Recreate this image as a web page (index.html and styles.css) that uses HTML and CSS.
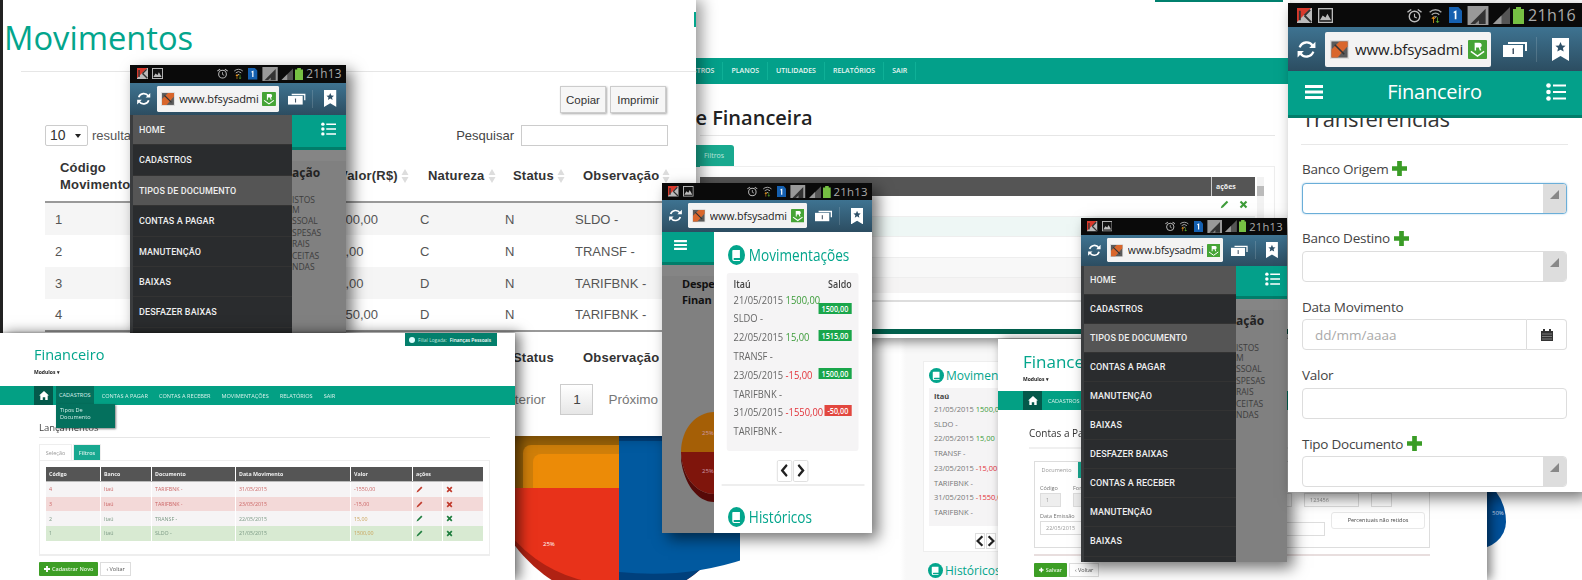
FILE: index.html
```html
<!DOCTYPE html>
<html lang="pt-BR">
<head>
<meta charset="utf-8">
<title>Financeiro</title>
<link rel="stylesheet" href="styles.css">
</head>
<body>
<svg class="sprite" aria-hidden="true">
  <symbol id="i-k" viewBox="0 0 16 16"><rect width="16" height="16" fill="#bbb"/><path d="M0 0h15L0 15z" fill="#d8392c"/><path d="M8 8l7 7M8 8l6-6M3 3v10" stroke="#333" stroke-width="2" fill="none"/></symbol>
  <symbol id="i-pic" viewBox="0 0 16 16"><rect x=".7" y=".7" width="14.6" height="14.6" fill="#111" stroke="#bbb" stroke-width="1.4"/><path d="M2 13l3-5 3 2 2-4 4 7z" fill="#bbb"/></symbol>
  <symbol id="i-alarm" viewBox="0 0 16 16"><circle cx="8" cy="9" r="5.6" fill="none" stroke="#bbb" stroke-width="1.5"/><path d="M8 6v3.4l2.4 1.2" fill="none" stroke="#bbb" stroke-width="1.2"/><path d="M0 4l4-3 1 1-4 3zM16 4l-4-3-1 1 4 3z" fill="#bbb"/></symbol>
  <symbol id="i-wifi" viewBox="0 0 16 18"><path d="M1 5a10 10 0 0 1 14 0M3.5 8a6.5 6.5 0 0 1 9 0" fill="none" stroke="#aaa" stroke-width="1.6"/><path d="M6 10h4l-2 2z" fill="#aaa"/><path d="M5 18v-5H3l2.500-3L8 13H6v5z" fill="#e8941a"/><path d="M11 11v5h2l-2.500 2L8 16h2v-5z" fill="#5bb030"/></symbol>
  <symbol id="i-sim" viewBox="0 0 14 17"><path d="M0 0h10l4 4v13H0z" fill="#1560b0"/><path d="M5 5l3-1.500V13H6.200V6L5 6.500z" fill="#fff"/></symbol>
  <symbol id="i-sigbox" viewBox="0 0 22 20"><rect width="22" height="20" fill="#999"/><path d="M3 19L19 3v16z" fill="#333"/><path d="M8 19l4-4v4z" fill="#888"/></symbol>
  <symbol id="i-sig" viewBox="0 0 18 18"><path d="M0 18L18 0v18z" fill="#555"/><path d="M0 18l9-9v9z" fill="#999"/></symbol>
  <symbol id="i-batt" viewBox="0 0 11 17"><path d="M3 0h5v2h3v15H0V2h3z" fill="#76c043"/></symbol>
  <symbol id="i-refresh" viewBox="0 0 20 20"><path d="M3.500 8A7 7 0 0 1 16 6.500M16.500 12A7 7 0 0 1 4 13.500" fill="none" stroke="#fff" stroke-width="2.200"/><path d="M18.500 2.500v6h-6zM1.500 17.500v-6h6z" fill="#fff"/></symbol>
  <symbol id="i-fav" viewBox="0 0 20 20"><rect width="20" height="20" fill="#ddd"/><rect x="1.500" y="1.500" width="17" height="17" fill="#5a5a5a"/><path d="M1.500 10L10 1.500h8.500v5L8 18.500H1.500z" fill="#d9662c"/><path d="M5 5l10 10" stroke="#333" stroke-width="1.600"/></symbol>
  <symbol id="i-r" viewBox="0 0 20 20"><rect width="20" height="20" rx="1" fill="#45a436"/><path d="M7 3h5a2.500 2.500 0 0 1 1 4.800L14 11h-1.600l-1-3H8.500v3H7z" fill="#fff"/><path d="M3 12l7 5 7-5" fill="none" stroke="#fff" stroke-width="1.500"/></symbol>
  <symbol id="i-tabs" viewBox="0 0 24 16"><path d="M5 1h19v9h-2V3H5z" fill="#fff"/><rect y="4" width="20" height="12" fill="#fff"/><path d="M9 8l2-1v6H9.500V8.500z" fill="#456"/></symbol>
  <symbol id="i-bm" viewBox="0 0 17 23"><path d="M0 0h17v23l-8.500-5L0 23z" fill="#fff"/><path d="M8.500 4l1.500 3.400 3.600.3-2.700 2.400.8 3.500-3.200-1.900-3.200 1.900.8-3.500L3.400 7.700 7 7.400z" fill="#2e5068"/></symbol>
  <symbol id="i-burger" viewBox="0 0 18 14"><path d="M0 0h18v3H0zM0 5.500h18v3H0zM0 11h18v3H0z" fill="#fff"/></symbol>
  <symbol id="i-list" viewBox="0 0 20 18"><circle cx="2.500" cy="2.500" r="2.300" fill="#fff"/><circle cx="2.500" cy="9" r="2.300" fill="#fff"/><circle cx="2.500" cy="15.500" r="2.300" fill="#fff"/><path d="M7 1.500h13v2H7zM7 8h13v2H7zM7 14.500h13v2H7z" fill="#fff"/></symbol>
  <symbol id="i-book" viewBox="0 0 20 20"><circle cx="10" cy="10" r="10" fill="#03a58c"/><path d="M6 5h8v8H7.500a1 1 0 0 0 0 2H14v1H7a2 2 0 0 1-2-2V6a1 1 0 0 1 1-1z" fill="#fff"/></symbol>
  <symbol id="i-plus" viewBox="0 0 16 16"><path d="M5.500 0h5v5.500H16v5h-5.500V16h-5v-5.500H0v-5h5.500z" fill="#3a9c26"/></symbol>
  <symbol id="i-pen" viewBox="0 0 12 12"><path d="M9 1l2 2-7 7-3 1 1-3z" fill="currentColor"/></symbol>
  <symbol id="i-x" viewBox="0 0 12 12"><path d="M1 3l2-2 3 3 3-3 2 2-3 3 3 3-2 2-3-3-3 3-2-2 3-3z" fill="currentColor"/></symbol>
  <symbol id="i-cal" viewBox="0 0 12 12"><path d="M0 2h2V0h2v2h4V0h2v2h2v10H0z" fill="#333"/><path d="M1 5h10M1 7.500h10M1 10h10" stroke="#999" stroke-width=".7"/></symbol>
  <symbol id="i-home" viewBox="0 0 12 11"><path d="M6 0l6 5.500h-1.500V11H7.500V7.500h-3V11H1.500V5.500H0z" fill="#fff"/></symbol>
  <symbol id="i-left" viewBox="0 0 10 14"><path d="M8 1L2 7l6 6" fill="none" stroke="#222" stroke-width="2.800"/></symbol>
  <symbol id="i-right" viewBox="0 0 10 14"><path d="M2 1l6 6-6 6" fill="none" stroke="#222" stroke-width="2.800"/></symbol>
  <symbol id="i-sort" viewBox="0 0 8 14"><path d="M4 0l3.500 6h-7zM4 14L.500 8h7z" fill="#ddd"/></symbol>
  <symbol id="i-tri" viewBox="0 0 10 10"><path d="M0 10L10 0v10z" fill="#888"/></symbol>
</svg>

<main class="desktop">

  <svg class="chart" viewBox="0 0 260 145">
    <ellipse cx="104" cy="15" rx="135" ry="150" fill="#b02213"/>
    <path d="M104 15v150a135 150 0 0 0 135-150l-5-15H104z" fill="#00407c"/>
    <path d="M0 0h104v53H0z" fill="#9a6208"/>
    <path d="M8 18a8 8 0 0 1 8-8h88v43H8z" fill="#d07f0a"/>
    <path d="M18 27a8 8 0 0 1 8-8h78v34H18z" fill="#ec8b07"/>
    <path d="M-30 53h134v96A135 135 0 0 1-30 53z" fill="#e8321a"/>
    <path d="M104 0h126v3H104z" fill="#003a70"/>
    <path d="M104 6h126v118q-60 20-126 13z" fill="#01599f"/>
    <text x="28" y="111" class="chart-label">25%</text>
  </svg>

  <div class="pie-edge"><span>50%</span></div>

  <section class="window win-c">
    <div class="c-card">
      <h3 class="c-title"><svg class="c-ico"><use href="#i-book"/></svg>Movimentações</h3>
      <div class="c-box">
        <p class="c-bank">Itaú</p>
        <p class="c-line">21/05/2015 <span class="pos">1500,00</span></p>
        <p class="c-line">SLDO -</p>
        <p class="c-line">22/05/2015 <span class="pos">15,00</span></p>
        <p class="c-line">TRANSF -</p>
        <p class="c-line">23/05/2015 <span class="neg">-15,00</span></p>
        <p class="c-line">TARIFBNK -</p>
        <p class="c-line">31/05/2015 <span class="neg">-1550,00</span></p>
        <p class="c-line">TARIFBNK -</p>
      </div>
      <div class="c-pager">
        <span class="c-page"><svg class="c-arrow"><use href="#i-left"/></svg></span>
        <span class="c-page"><svg class="c-arrow"><use href="#i-right"/></svg></span>
      </div>
    </div>
    <h3 class="c-title c-hist"><svg class="c-ico"><use href="#i-book"/></svg>Históricos</h3>
  </section>

  <section class="window win-b">
    <div class="b-topbar"></div>
    <nav class="b-nav">
      <span class="b-nav-item">CADASTROS</span>
      <span class="b-nav-item">PLANOS</span>
      <span class="b-nav-item">UTILIDADES</span>
      <span class="b-nav-item">RELATÓRIOS</span>
      <span class="b-nav-item">SAIR</span>
    </nav>
    <h2 class="b-title">Análise Financeira</h2>
    <div class="b-tabs"><span class="b-tab">Filtros</span></div>
    <div class="b-panel">
      <div class="b-table">
        <div class="b-head"><span class="b-head-main"></span><span class="b-head-act">ações</span></div>
        <div class="b-row"><span class="b-row-act"><svg class="b-ico"><use href="#i-pen"/></svg><svg class="b-ico"><use href="#i-x"/></svg></span></div>
        <div class="b-row b-row-tint"></div>
        <div class="b-row"></div>
        <div class="b-row b-row-gray"></div>
        <div class="b-row b-row-end"></div>
      </div>
      <div class="b-scroll"><span class="b-thumb"></span></div>
    </div>
    <div class="b-foot"></div>
  </section>

  <section class="window win-g">
    <header class="e-head g-head">
      <div class="e-brand g-brand">Financeiro</div>
      <div class="e-mod">Modulos ▾</div>
    </header>
    <nav class="e-nav g-nav">
      <span class="e-home"><svg class="e-home-ico"><use href="#i-home"/></svg></span>
      <span class="e-nav-item">CADASTROS</span>
    </nav>
    <div class="g-page">
      <h2 class="g-title">Contas a Pagar</h2>
      <div class="g-panel">
        <div class="g-tabs"><span class="g-tab">Documento</span><span class="g-tab-on"></span></div>
        <div class="g-fields">
          <label class="g-field">Código<span class="g-input g-input-gray g-w-code">1</span></label>
          <label class="g-field">Fornecedor<span class="g-input g-input-gray g-w-forn"></span></label>
          <span class="g-input g-sel"></span>
          <span class="g-input g-w-num">123456</span>
          <span class="g-input g-w-small"></span>
        </div>
        <div class="g-fields g-fields-2">
          <label class="g-field">Data Emissão<span class="g-input g-w-date">22/05/2015</span></label>
          <span class="g-input g-w-long"></span>
          <span class="g-btn-outline">Percentuais não retidos</span>
        </div>
      </div>
      <div class="g-rule"></div>
      <div class="g-actions">
        <span class="btn-green g-save"><svg class="btn-plus"><use href="#i-plus"/></svg>Salvar</span>
        <span class="btn-plain">‹ Voltar</span>
      </div>
    </div>
  </section>

  <section class="window win-a">
    <h1 class="a-title">Movimentos</h1>
    <div class="a-tools">
      <button class="a-btn a-btn-copy">Copiar</button>
      <button class="a-btn a-btn-print">Imprimir</button>
    </div>
    <div class="a-filter">
      <span class="a-len">10<i class="a-caret"></i></span>
      <span class="a-label">resultados</span>
      <span class="a-search-label">Pesquisar</span>
      <span class="a-search"></span>
    </div>
    <div class="a-grid a-head">
      <span class="a-th a-th-first">Código<br>Movimento</span>
      <span class="a-th">Histórico</span>
      <span class="a-th">Valor(R$)<svg class="a-sort"><use href="#i-sort"/></svg></span>
      <span class="a-th">Natureza<svg class="a-sort"><use href="#i-sort"/></svg></span>
      <span class="a-th">Status<svg class="a-sort"><use href="#i-sort"/></svg></span>
      <span class="a-th">Observação<svg class="a-sort"><use href="#i-sort"/></svg></span>
    </div>
    <div class="a-grid a-row a-row-alt"><span>1</span><span></span><span>1500,00</span><span>C</span><span>N</span><span>SLDO -</span></div>
    <div class="a-grid a-row"><span>2</span><span></span><span>15,00</span><span>C</span><span>N</span><span>TRANSF -</span></div>
    <div class="a-grid a-row a-row-alt"><span>3</span><span></span><span>15,00</span><span>D</span><span>N</span><span>TARIFBNK -</span></div>
    <div class="a-grid a-row a-row-last"><span>4</span><span></span><span>1550,00</span><span>D</span><span>N</span><span>TARIFBNK -</span></div>
    <div class="a-grid a-foot">
      <span></span><span></span><span></span><span></span>
      <span class="a-th">Status</span>
      <span class="a-th">Observação</span>
    </div>
    <div class="a-pager">
      <span>Anterior</span><span class="a-page">1</span><span>Próximo</span>
    </div>
    <span class="a-strip"></span>
  </section>

  <section class="phone ph-d">
    <div class="chrome ch-d">
      <div class="status">
        <svg class="s-ico"><use href="#i-k"/></svg><svg class="s-ico"><use href="#i-pic"/></svg>
        <span class="status-gap"></span>
        <svg class="s-ico"><use href="#i-alarm"/></svg><svg class="s-ico"><use href="#i-wifi"/></svg><svg class="s-sim"><use href="#i-sim"/></svg><svg class="s-box"><use href="#i-sigbox"/></svg><svg class="s-sig"><use href="#i-sig"/></svg><svg class="s-bat"><use href="#i-batt"/></svg>
        <span class="clock">21h13</span>
      </div>
      <div class="urlbar">
        <svg class="u-ref"><use href="#i-refresh"/></svg>
        <div class="urlbox"><svg class="u-fav"><use href="#i-fav"/></svg><span class="url">www.bfsysadmi</span><svg class="u-r"><use href="#i-r"/></svg></div>
        <svg class="u-tabs"><use href="#i-tabs"/></svg><i class="u-sep"></i><svg class="u-bm"><use href="#i-bm"/></svg>
      </div>
    </div>
    <div class="ph-body">
      <nav class="menu menu-d">
        <a class="menu-item on">HOME</a>
        <a class="menu-item">CADASTROS</a>
        <a class="menu-item on">TIPOS DE DOCUMENTO</a>
        <a class="menu-item">CONTAS A PAGAR</a>
        <a class="menu-item">MANUTENÇÃO</a>
        <a class="menu-item">BAIXAS</a>
        <a class="menu-item">DESFAZER BAIXAS</a>
      </nav>
      <div class="side">
        <div class="side-bar"><svg class="side-list"><use href="#i-list"/></svg></div>
        <div class="side-band"></div>
        <div class="side-title">ação</div>
        <div class="side-text">
          <p>ISTOS</p><p>M</p><p>SSOAL</p><p class="gap">SPESAS</p><p>RAIS</p><p class="gap">CEITAS</p><p>NDAS</p>
        </div>
      </div>
    </div>
  </section>

  <section class="window win-e">
    <header class="e-head">
      <div class="e-badge"><i class="e-dot"></i>Filial Logada: <b>Finanças Pessoais</b></div>
      <div class="e-brand">Financeiro</div>
      <div class="e-mod">Modulos ▾</div>
    </header>
    <nav class="e-nav">
      <span class="e-home"><svg class="e-home-ico"><use href="#i-home"/></svg></span>
      <span class="e-nav-item e-nav-on">CADASTROS
        <span class="e-drop">Tipos De<br>Documento</span>
      </span>
      <span class="e-nav-item">CONTAS A PAGAR</span>
      <span class="e-nav-item">CONTAS A RECEBER</span>
      <span class="e-nav-item">MOVIMENTAÇÕES</span>
      <span class="e-nav-item">RELATÓRIOS</span>
      <span class="e-nav-item">SAIR</span>
    </nav>
    <div class="e-page">
      <h2 class="e-title">Lançamentos</h2>
      <div class="e-tabs"><span class="e-tab">Seleção</span><span class="e-tab e-tab-on">Filtros</span></div>
      <div class="e-panel">
        <div class="e-grid e-th"><span>Código</span><span>Banco</span><span>Documento</span><span>Data Movimento</span><span>Valor</span><span class="e-span">ações</span></div>
        <div class="e-grid e-tr e-red"><span>4</span><span>Itaú</span><span>TARIFBNK -</span><span>31/05/2015</span><span>-1550,00</span><span><svg class="e-ico"><use href="#i-pen"/></svg></span><span><svg class="e-ico"><use href="#i-x"/></svg></span></div>
        <div class="e-grid e-tr e-red e-red-bg"><span>3</span><span>Itaú</span><span>TARIFBNK -</span><span>23/05/2015</span><span>-15,00</span><span><svg class="e-ico"><use href="#i-pen"/></svg></span><span><svg class="e-ico"><use href="#i-x"/></svg></span></div>
        <div class="e-grid e-tr e-grn"><span>2</span><span>Itaú</span><span>TRANSF -</span><span>22/05/2015</span><span class="e-val">15,00</span><span><svg class="e-ico"><use href="#i-pen"/></svg></span><span><svg class="e-ico"><use href="#i-x"/></svg></span></div>
        <div class="e-grid e-tr e-grn e-grn-bg"><span>1</span><span>Itaú</span><span>SLDO -</span><span>21/05/2015</span><span class="e-val">1500,00</span><span><svg class="e-ico"><use href="#i-pen"/></svg></span><span><svg class="e-ico"><use href="#i-x"/></svg></span></div>
      </div>
      <div class="e-actions">
        <span class="btn-green"><svg class="btn-plus"><use href="#i-plus"/></svg>Cadastrar Novo</span>
        <span class="btn-plain">‹ Voltar</span>
      </div>
    </div>
  </section>

  <section class="phone ph-f">
    <div class="chrome ch-f">
      <div class="status">
        <svg class="s-ico"><use href="#i-k"/></svg><svg class="s-ico"><use href="#i-pic"/></svg>
        <span class="status-gap"></span>
        <svg class="s-ico"><use href="#i-alarm"/></svg><svg class="s-ico"><use href="#i-wifi"/></svg><svg class="s-sim"><use href="#i-sim"/></svg><svg class="s-box"><use href="#i-sigbox"/></svg><svg class="s-sig"><use href="#i-sig"/></svg><svg class="s-bat"><use href="#i-batt"/></svg>
        <span class="clock">21h13</span>
      </div>
      <div class="urlbar">
        <svg class="u-ref"><use href="#i-refresh"/></svg>
        <div class="urlbox"><svg class="u-fav"><use href="#i-fav"/></svg><span class="url">www.bfsysadmi</span><svg class="u-r"><use href="#i-r"/></svg></div>
        <svg class="u-tabs"><use href="#i-tabs"/></svg><i class="u-sep"></i><svg class="u-bm"><use href="#i-bm"/></svg>
      </div>
    </div>
    <div class="ph-body">
      <div class="f-side">
        <div class="f-bar"><svg class="f-burger"><use href="#i-burger"/></svg></div>
        <div class="side-band"></div>
        <div class="f-title">Despe<br>Finan</div>
        <svg class="f-pie" viewBox="0 0 52 100">
          <path d="M52 9C35 9 19 25 19 49h33z" fill="#a55f06"/>
          <path d="M19 49v8c3 23 16 42 33 42v-8C35 91 20 75 19 49z" fill="#560a08"/>
          <path d="M19 49h33v42C35 91 20 75 19 49z" fill="#7f150c"/>
          <text x="40" y="32" class="f-pct">25%</text>
          <text x="40" y="70" class="f-pct">25%</text>
        </svg>
      </div>
      <div class="f-drawer">
        <div class="f-inner">
          <h3 class="f-h"><svg class="f-ico"><use href="#i-book"/></svg>Movimentações</h3>
          <div class="f-box">
            <div class="f-boxhead"><b>Itaú</b><b>Saldo</b></div>
            <div class="f-line">21/05/2015 <span class="pos">1500,00</span></div>
            <div class="f-line f-drop"><span class="badge">1500,00</span>SLDO -</div>
            <div class="f-line"><span class="badge">1515,00</span>22/05/2015 <span class="pos">15,00</span></div>
            <div class="f-line">TRANSF -</div>
            <div class="f-line"><span class="badge">1500,00</span>23/05/2015 <span class="neg">-15,00</span></div>
            <div class="f-line">TARIFBNK -</div>
            <div class="f-line"><span class="badge badge-red">-50,00</span>31/05/2015 <span class="neg">-1550,00</span></div>
            <div class="f-line">TARIFBNK -</div>
          </div>
          <div class="f-pager">
            <span class="f-page"><svg class="f-arrow"><use href="#i-left"/></svg></span>
            <span class="f-page"><svg class="f-arrow"><use href="#i-right"/></svg></span>
          </div>
          <div class="f-rule"></div>
          <h3 class="f-h f-h2"><svg class="f-ico"><use href="#i-book"/></svg>Históricos</h3>
        </div>
      </div>
    </div>
  </section>

  <section class="phone ph-h">
    <div class="chrome ch-h">
      <div class="status">
        <svg class="s-ico"><use href="#i-k"/></svg><svg class="s-ico"><use href="#i-pic"/></svg>
        <span class="status-gap"></span>
        <svg class="s-ico"><use href="#i-alarm"/></svg><svg class="s-ico"><use href="#i-wifi"/></svg><svg class="s-sim"><use href="#i-sim"/></svg><svg class="s-box"><use href="#i-sigbox"/></svg><svg class="s-sig"><use href="#i-sig"/></svg><svg class="s-bat"><use href="#i-batt"/></svg>
        <span class="clock">21h13</span>
      </div>
      <div class="urlbar">
        <svg class="u-ref"><use href="#i-refresh"/></svg>
        <div class="urlbox"><svg class="u-fav"><use href="#i-fav"/></svg><span class="url">www.bfsysadmi</span><svg class="u-r"><use href="#i-r"/></svg></div>
        <svg class="u-tabs"><use href="#i-tabs"/></svg><i class="u-sep"></i><svg class="u-bm"><use href="#i-bm"/></svg>
      </div>
    </div>
    <div class="ph-body">
      <nav class="menu menu-h">
        <a class="menu-item on">HOME</a>
        <a class="menu-item">CADASTROS</a>
        <a class="menu-item on">TIPOS DE DOCUMENTO</a>
        <a class="menu-item">CONTAS A PAGAR</a>
        <a class="menu-item">MANUTENÇÃO</a>
        <a class="menu-item">BAIXAS</a>
        <a class="menu-item">DESFAZER BAIXAS</a>
        <a class="menu-item">CONTAS A RECEBER</a>
        <a class="menu-item">MANUTENÇÃO</a>
        <a class="menu-item">BAIXAS</a>
      </nav>
      <div class="side">
        <div class="side-bar side-bar-h"><svg class="side-list"><use href="#i-list"/></svg></div>
        <div class="side-band"></div>
        <div class="side-title side-title-h">ação</div>
        <div class="side-text">
          <p>ISTOS</p><p>M</p><p>SSOAL</p><p class="gap">SPESAS</p><p>RAIS</p><p class="gap">CEITAS</p><p>NDAS</p>
        </div>
      </div>
    </div>
  </section>

  <section class="phone ph-i">
    <div class="chrome ch-i">
      <div class="status">
        <svg class="s-ico"><use href="#i-k"/></svg><svg class="s-ico"><use href="#i-pic"/></svg>
        <span class="status-gap"></span>
        <svg class="s-ico"><use href="#i-alarm"/></svg><svg class="s-ico"><use href="#i-wifi"/></svg><svg class="s-sim"><use href="#i-sim"/></svg><svg class="s-box"><use href="#i-sigbox"/></svg><svg class="s-sig"><use href="#i-sig"/></svg><svg class="s-bat"><use href="#i-batt"/></svg>
        <span class="clock">21h16</span>
      </div>
      <div class="urlbar">
        <svg class="u-ref"><use href="#i-refresh"/></svg>
        <div class="urlbox"><svg class="u-fav"><use href="#i-fav"/></svg><span class="url">www.bfsysadmi</span><svg class="u-r"><use href="#i-r"/></svg></div>
        <svg class="u-tabs"><use href="#i-tabs"/></svg><i class="u-sep"></i><svg class="u-bm"><use href="#i-bm"/></svg>
      </div>
    </div>
    <header class="i-bar">
      <svg class="i-burger"><use href="#i-burger"/></svg>
      <span class="i-brand">Financeiro</span>
      <svg class="i-list"><use href="#i-list"/></svg>
    </header>
    <div class="i-body">
      <div class="i-cut"><h2 class="i-title">Transferências</h2></div>
      <div class="i-field i-first">
        <label class="i-label">Banco Origem<svg class="i-plus"><use href="#i-plus"/></svg></label>
        <div class="i-select i-focus"><span class="i-arrow"><svg class="i-tri"><use href="#i-tri"/></svg></span></div>
      </div>
      <div class="i-field">
        <label class="i-label">Banco Destino<svg class="i-plus"><use href="#i-plus"/></svg></label>
        <div class="i-select"><span class="i-arrow"><svg class="i-tri"><use href="#i-tri"/></svg></span></div>
      </div>
      <div class="i-field">
        <label class="i-label">Data Movimento</label>
        <div class="i-date"><span class="i-input i-ph">dd/mm/aaaa</span><span class="i-calbtn"><svg class="i-cal"><use href="#i-cal"/></svg></span></div>
      </div>
      <div class="i-field">
        <label class="i-label">Valor</label>
        <div class="i-input"></div>
      </div>
      <div class="i-field">
        <label class="i-label">Tipo Documento<svg class="i-plus"><use href="#i-plus"/></svg></label>
        <div class="i-select"><span class="i-arrow"><svg class="i-tri"><use href="#i-tri"/></svg></span></div>
      </div>
    </div>
  </section>

</main>
</body>
</html>
```

FILE: styles.css
```css
* { box-sizing: border-box; }
html, body { margin: 0; padding: 0; background: #fff; }
body { overflow: hidden; font-family: "Open Sans", "Liberation Sans", sans-serif; }
h1, h2, h3, p { margin: 0; font-weight: normal; }
.sprite { position: absolute; width: 0; height: 0; }
.desktop { position: relative; width: 1582px; height: 580px; overflow: hidden; background: #fff; }

/* free-canvas windows */
.window, .phone { position: absolute; overflow: hidden; background: #fff; }
.win-c { left: 740px; top: 338px; width: 300px; height: 242px; z-index: 2; background: linear-gradient(90deg, #fff 0, #fff 160px, #f8f8f8 166px); padding: 23px 0 0 183px; }
.win-b { left: 520px; top: 0; width: 770px; height: 338px; z-index: 3; box-shadow: 0 4px 10px rgba(0,0,0,.45); }
.win-g { left: 998px; top: 339px; width: 489px; height: 241px; z-index: 4; box-shadow: 4px 0 10px rgba(0,0,0,.5); filter: blur(.3px); }
.win-a { left: 0; top: 0; width: 696px; height: 436px; z-index: 5; border-left: 3px solid #222; box-shadow: 6px 0 14px rgba(0,0,0,.4); }
.win-e { left: 0; top: 333px; width: 515px; height: 247px; z-index: 7; box-shadow: 5px 0 12px rgba(0,0,0,.55), 0 -1px 2px rgba(0,0,0,.2); filter: blur(.4px); }

.chart { position: absolute; left: 515px; top: 435px; width: 260px; height: 145px; z-index: 1; }
.chart-label { font: 6px "Open Sans", sans-serif; fill: #fff; }
.pie-edge { position: absolute; left: 1440px; top: 480px; width: 66px; height: 70px; border-radius: 0 50% 50% 0 / 0 60% 40% 0; background: #01509a; z-index: 1; color: #cde; font-size: 6px; padding: 29px 0 0 52px; }

/* A: movimentos */
.a-title { height: 72px; margin-left: 1px; padding-top: 12px; font-size: 32.700px; line-height: 52px; color: #03a58c; position: relative; }
.a-title::after { content: ""; position: absolute; left: 17px; right: 0; bottom: 0; height: 1px; background: #e6e6e6; }
.a-tools { display: flex; justify-content: flex-end; gap: 4px; padding: 14px 30px 0 0; }
.a-btn { height: 27px; padding: 0; background: #f6f6f6; border: 1px solid #ccc; box-shadow: 1px 1px 2px #aaa; font: 11.500px "Liberation Sans", sans-serif; color: #333; }
.a-btn-copy { width: 46px; }
.a-btn-print { width: 56px; }
.a-filter { display: flex; align-items: center; height: 21px; margin-top: 12px; padding-left: 42px; font: 13px "Liberation Sans", sans-serif; color: #555; }
.a-len { position: relative; width: 43px; height: 21px; border: 1px solid #ccc; border-radius: 2px; line-height: 19px; padding-left: 4px; color: #333; font-size: 14px; }
.a-caret { position: absolute; right: 6px; top: 8px; border: 3px solid transparent; border-top: 4px solid #222; }
.a-label { margin-left: 4px; }
.a-search-label { margin-left: auto; color: #444; }
.a-search { width: 147px; height: 21px; border: 1px solid #ccc; margin: 0 28px 0 7px; }
.a-grid { display: grid; grid-template-columns: 85px 201px 89px 85px 70px 87px; margin-left: 42px; width: 617px; font: 13px "Liberation Sans", sans-serif; }
.a-head { height: 53px; margin-top: 4px; align-items: center; border-bottom: 2px solid #999; }
.a-th { font-weight: bold; color: #333; padding-left: 8px; line-height: 17px; letter-spacing: .2px; white-space: nowrap; }
.a-th-first { padding-left: 15px; }
.a-sort { width: 8px; height: 14px; margin-left: 3px; vertical-align: -3px; }
.a-row { height: 32px; align-items: center; color: #555; font-size: 13px; }
.a-row span:first-child { padding-left: 10px; }
.a-row-alt { background: #f5f5f5; }
.a-row-last { border-bottom: 2px solid #999; height: 33px; }
.a-foot { height: 34px; margin-top: 8px; align-items: center; }
.a-pager { display: flex; justify-content: flex-end; align-items: center; gap: 15px; padding-right: 38px; margin-top: 9px; font: 13.500px "Liberation Sans", sans-serif; color: #777; height: 32px; }
.a-page { width: 33px; height: 31px; background: linear-gradient(#fff, #e6e6e6); border: 1px solid #ccc; text-align: center; line-height: 29px; color: #444; }
.a-strip { position: absolute; right: 0; top: 12px; width: 2px; height: 15px; background: #03a58c; }

/* B: analise financeira */
.b-topbar { width: 128px; height: 2px; margin-left: 635px; background: #00806e; }
.b-nav { display: flex; height: 26px; margin-top: 56px; background: #03a08a; align-items: center; padding-left: 146px; font: 600 7px "Open Sans", sans-serif; color: #e8f6f3; }
.b-nav-item { padding: 0 8px; border-right: 1px solid #0fb097; line-height: 18px; white-space: nowrap; }
.b-title { margin: 20px 0 0 117px; height: 31px; font-size: 20px; font-weight: 600; line-height: 27px; color: #222; white-space: nowrap; }
.b-tabs { height: 31px; margin-left: 180px; padding-top: 9px; border-top: 1px solid #e6e6e6; width: 575px; }
.b-tab { display: block; width: 44px; margin-left: -10px; padding-left: 14px; height: 22px; border-radius: 0 3px 0 0; background: #19a98f; color: #bfe8df; font-size: 7px; line-height: 22px; }
.b-panel { display: flex; gap: 2px; width: 575px; height: 166px; margin-left: 180px; padding: 10px 10px 0 0; border: 1px solid #eee; border-width: 1px 1px 0 0; }
.b-table { width: 556px; }
.b-head { display: flex; height: 19px; background: #555; color: #eee; font: bold 7px "Open Sans", sans-serif; }
.b-head-main { width: 512px; border-right: 1px solid #ccc; }
.b-head-act { padding: 5px 0 0 4px; }
.b-row { height: 20.500px; border-bottom: 1px solid #eee; display: flex; justify-content: flex-end; }
.b-row-tint { background: #eef7f5; }
.b-row-gray { background: #f8f8f8; }
.b-row-end { height: 24px; background: linear-gradient(#f5f4f4 15px, #fff 15px); border-bottom: 2px solid #ddd; }
.b-row-act { display: flex; gap: 10px; width: 38px; padding: 4px 0 0 3px; }
.b-ico { width: 9px; height: 9px; color: #3e9c3a; }
.b-scroll { width: 7px; height: 70px; background: #f2f2f2; }
.b-thumb { display: block; width: 7px; height: 10px; margin-top: 9px; background: #bbb; }
.b-foot { height: 5px; margin-top: -3px; background: #00604d; }

/* C */
.c-card { width: 160px; height: 191px; padding: 5px; background: #fff; border: 1px solid #eee; }
.c-title { display: flex; align-items: center; gap: 2px; height: 16px; font-size: 12px; color: #03a58c; white-space: nowrap; }
.c-ico { width: 15px; height: 15px; flex: none; }
.c-box { margin-top: 5px; height: 138px; padding: 3px 5px; background: #f5f4f5; font-size: 7.500px; color: #777; }
.c-bank { font-weight: 700; color: #444; line-height: 11px; }
.c-line { line-height: 14.700px; white-space: nowrap; }
.pos { color: #3d9c3a; }
.neg { color: #e2333a; }
.c-pager { display: flex; justify-content: center; gap: 1px; padding-top: 7px; padding-left: 42px; width: 70px; }
.c-page { width: 10px; height: 16px; background: #fff; border: 1px solid #ddd; flex: none; }
.c-arrow { display: block; width: 8px; height: 12px; margin-top: 1px; }
.c-hist { margin-top: 10px; margin-left: 5px; }

/* shared small-site header */
.e-head { position: relative; height: 53px; padding: 0 0 0 34px; }
.e-badge { position: absolute; right: 18px; top: 0; height: 13px; width: 92px; padding: 0 4px; display: flex; align-items: center; gap: 3px; background: #037f6c; color: #bfe4dd; font-size: 4.800px; white-space: nowrap; }
.e-badge b { color: #fff; font-weight: 600; }
.e-dot { width: 6px; height: 6px; border-radius: 50%; background: #dff; flex: none; }
.e-brand { padding-top: 12px; font-size: 14.500px; line-height: 20px; color: #03a58c; }
.e-mod { margin-top: 4px; font-size: 5px; line-height: 7px; font-weight: 700; color: #222; }
.e-nav { display: flex; height: 19px; width: 515px; padding-left: 34px; background: #03a084; align-items: stretch; font-size: 5.600px; color: #d7f1eb; }
.e-home { width: 19px; background: #04594b; display: flex; align-items: center; justify-content: center; }
.e-home-ico { width: 10px; height: 9px; }
.e-nav-item { position: relative; padding: 0 11px 0 0; display: flex; align-items: center; white-space: nowrap; }
.e-nav-item:nth-child(2) { margin-left: 3px; padding: 0 3px; }
.e-nav-item:nth-child(3) { padding-left: 8px; }
.e-nav-on { background: #04705d; height: 18px; }
.e-drop { position: absolute; left: 0; top: 18px; width: 59px; height: 24px; padding: 3px 4px; background: #04705d; box-shadow: 1px 1px 2px rgba(0,0,0,.5); color: #d7f1eb; line-height: 7px; white-space: normal; }
.e-page { padding: 0 25px 0 39px; }
.e-title { height: 33px; padding-top: 16px; font-size: 9.500px; line-height: 14px; color: #444; border-bottom: 1px solid #e6e6e6; }
.e-tabs { display: flex; margin-top: 6px; height: 16px; font-size: 5.500px; color: #999; }
.e-tab { width: 33px; text-align: center; line-height: 16px; border: 1px solid #eee; border-bottom: 0; }
.e-tab-on { width: 28px; margin-left: 1px; background: #18a890; color: #d7f1eb; font-weight: 600; }
.e-panel { height: 96px; padding: 6px 6px 0 6px; border: 1px solid #eee; border-bottom-width: 2px; }
.e-grid { display: grid; grid-template-columns: 55px 51px 84px 115px 62px 30px 41px; font-size: 5.300px; }
.e-grid > span { padding-left: 3px; display: flex; align-items: center; border-right: 1px solid #fff; }
.e-th { height: 15px; background: #555; color: #eee; font-weight: 700; border-bottom: 1px solid #bbb; }
.e-span { grid-column: span 2; }
.e-tr { height: 14.700px; background: #f6f4f5; }
.e-red { color: #c66; }
.e-red-bg { background: #f3d9d8; }
.e-grn { color: #7c9a85; }
.e-grn-bg { background: #d8ead2; }
.e-val { color: #c9a35a; }
.e-ico { width: 7px; height: 7px; }
.e-red .e-ico { color: #c0392b; }
.e-grn .e-ico { color: #1e7d3e; }
.e-actions { display: flex; gap: 2px; margin-top: 6px; }
.btn-green { display: inline-flex; align-items: center; gap: 2px; height: 14px; padding: 0 5px; background: #3d9e25; color: #e9f5e4; font-size: 5.500px; font-weight: 600; border-radius: 1px; white-space: nowrap; }
.btn-plus { width: 6px; height: 6px; filter: brightness(0) invert(1); }
.btn-plain { display: inline-flex; align-items: center; height: 14px; padding: 0 5px; border: 1px solid #ddd; color: #555; font-size: 5.500px; white-space: nowrap; }

/* G */
.g-head { height: 52px; padding-left: 25px; }
.g-brand { font-size: 17px; padding-top: 13px; }
.g-nav { width: 100%; padding-left: 25px; }
.g-page { padding: 0 0 0 36px; width: 432px; }
.g-title { margin-left: -5px; height: 39px; padding-top: 16px; font-size: 10px; line-height: 14px; color: #333; border-bottom: 2px solid #f0f0f0; width: 397px; }
.g-panel { position: relative; margin-top: 12px; height: 87px; width: 396px; border: 1px solid #ddd; padding: 0 0 0 5px; font-size: 5.500px; color: #777; }
.g-tabs { display: flex; height: 16px; margin-left: -5px; }
.g-tab { width: 43px; line-height: 16px; text-align: center; color: #999; }
.g-tab-on { width: 50px; background: #18a890; }
.g-fields { display: flex; gap: 12px; margin-top: 6px; }
.g-fields-2 { margin-top: 5px; }
.g-field { display: flex; flex-direction: column; gap: 1px; line-height: 8px; }
.g-input { display: block; height: 14px; border: 1px solid #ddd; padding-left: 5px; line-height: 12px; font-size: 5.500px; color: #999; }
.g-input-gray { background: #eee; }
.g-w-code { width: 21px; }
.g-w-forn { width: 30px; }
.g-sel { width: 177px; margin-top: 9px; }
.g-w-num { width: 55px; margin-top: 9px; }
.g-w-small { width: 21px; margin-top: 9px; }
.g-w-date { width: 60px; }
.g-w-long { width: 213px; margin-top: 10px; }
.g-btn-outline { height: 17px; width: 94px; margin-left: -6px; border: 1px solid #e8e8e8; border-radius: 3px; text-align: center; line-height: 15px; background: #fff; color: #444; white-space: nowrap; }
.g-rule { margin-top: 6px; width: 396px; height: 2px; background: #e8dede; }
.g-actions { display: flex; gap: 2px; margin-top: 7px; }
.g-save { width: 33px; }

/* phones */
.phone { box-shadow: 6px 6px 14px rgba(0,0,0,.55); }
.ph-d { left: 130px; top: 65px; width: 216px; height: 268px; z-index: 6; }
.ph-f { left: 662px; top: 183px; width: 210px; height: 350px; z-index: 8; }
.ph-h { left: 1081px; top: 218px; width: 206px; height: 344px; z-index: 9; }
.ph-i { left: 1288px; top: 3px; width: 294px; height: 489px; z-index: 10; }

.chrome { width: 100%; }
.ch-d { font-size: 7.350px; }
.ch-f { font-size: 7.140px; }
.ch-h { font-size: 7px; }
.ch-i { font-size: 10px; }
.status { display: flex; align-items: center; height: 2.400em; padding: 0 .6em 0 .9em; background: #0a0a0a; }
.status-gap { flex: 1; }
.s-ico { width: 1.500em; height: 1.500em; margin-right: .6em; }
.s-sim { width: 1.300em; height: 1.600em; margin-right: .5em; }
.s-box { width: 2.200em; height: 1.900em; margin-right: .4em; }
.s-sig { width: 1.700em; height: 1.700em; margin-right: .3em; }
.s-bat { width: 1.100em; height: 1.700em; margin-right: .4em; }
.clock { font-size: 1.600em; color: #aaa; letter-spacing: .02em; line-height: 1; white-space: nowrap; }
.urlbar { display: flex; align-items: center; height: 4.400em; padding-left: .8em; background: linear-gradient(#3e7391, #2c4d61); }
.u-ref { width: 2.100em; height: 2.100em; flex: none; }
.urlbox { display: flex; align-items: center; width: 16.600em; height: 3.500em; margin-left: .8em; padding: 0 .4em 0 .5em; background: #f3f3f3; border-radius: .2em; flex: none; }
.u-fav { width: 1.900em; height: 1.900em; flex: none; }
.url { flex: 1; margin-left: .4em; font-size: 1.500em; color: #222; letter-spacing: -.01em; white-space: nowrap; overflow: hidden; }
.u-r { width: 1.900em; height: 1.900em; flex: none; }
.u-tabs { width: 2.400em; height: 1.600em; margin-left: 1.200em; flex: none; }
.u-sep { width: 1px; height: 2.500em; margin-left: .9em; background: rgba(255,255,255,.15); flex: none; }
.u-bm { width: 1.700em; height: 2.300em; margin-left: 1.500em; flex: none; }

.ph-body { display: flex; }
.ph-d .ph-body { height: 153px; }
.ph-h .ph-body { height: 297px; }
.ph-f .ph-body { height: 301px; }
.menu { flex: none; background: #2a2c2e; overflow: hidden; border-left: 3px solid #3a3c3e; font: 500 9px Roboto, sans-serif; color: #eee; }
.menu-d { width: 162px; height: 218px; }
.menu-h { width: 155px; height: 297px; }
.menu-item { display: block; padding-left: 6px; letter-spacing: .1px; border-bottom: 1px solid #333; white-space: nowrap; }
.menu-d .menu-item { height: 30.400px; line-height: 30px; }
.menu-h .menu-item { height: 29.100px; line-height: 28px; }
.menu-item.on { background: #555; margin-left: -3px; padding-left: 9px; }
.side { flex: 1; height: 218px; background: #808080; color: #3d3d3d; overflow: hidden; }
.ph-h .side { height: 297px; }
.side-bar { display: flex; justify-content: flex-end; align-items: center; height: 35px; padding: 0 10px 3px 0; background: #03a08a; border-bottom: 3px solid #017d6a; }
.side-bar-h { height: 33px; padding-right: 7px; }
.side-list { width: 15px; height: 14px; }
.side-band { height: 11px; background: #858585; }
.side-title { font: 700 12px "Open Sans", sans-serif; color: #222; line-height: 14px; margin-top: 5px; }
.side-title-h { margin-top: 4px; }
.side-text { margin-top: 15px; font: 8.500px "Open Sans", sans-serif; }
.side-text p { line-height: 10.500px; }
.side-text .gap { margin-top: 2px; }

/* F */
.f-side { flex: none; width: 52px; height: 301px; background: #808080; overflow: hidden; }
.f-bar { display: flex; align-items: center; height: 33px; padding: 0 0 3px 12px; background: #03a08a; border-bottom: 3px solid #017d6a; }
.f-burger { width: 13px; height: 10px; }
.f-title { padding-left: 20px; font-size: 11px; font-weight: 700; line-height: 16px; color: #111; white-space: nowrap; letter-spacing: -.2px; overflow: hidden; }
.f-pie { display: block; width: 52px; height: 100px; margin-top: 95px; }
.f-pct { font: 6px "Open Sans", sans-serif; fill: #c9a; }
.f-drawer { flex: 1; height: 301px; overflow: hidden; background: #fff; }
.f-inner { width: 186px; padding: 13px 0 0 15px; transform: scaleX(.85); transform-origin: 0 0; }
.f-h { display: flex; align-items: center; gap: 3px; height: 20px; font-size: 16px; color: #03a58c; white-space: nowrap; }
.f-ico { width: 23px; height: 20px; flex: none; }
.f-box { width: 155px; height: 178px; margin-top: 8px; padding: 4px 8px; background: #f5f4f5; border-radius: 3px; font-size: 11px; color: #666; }
.f-boxhead { display: flex; justify-content: space-between; line-height: 14px; font-size: 10.500px; color: #444; }
.f-boxhead b { font-weight: 600; }
.f-line { min-height: 18.800px; line-height: 18.800px; white-space: nowrap; }
.badge { float: right; margin-top: 2px; padding: 0 4px; height: 11px; line-height: 11px; background: #1aa64b; color: #fff; font-size: 8.500px; font-weight: 600; }
.badge-red { background: #e2473f; }
.f-drop .badge { margin-top: -6px; }
.f-pager { display: flex; justify-content: center; gap: 1px; width: 155px; padding-top: 9px; }
.f-page { width: 18px; height: 22px; border: 1px solid #ddd; background: #fff; border-radius: 2px; display: flex; align-items: center; justify-content: center; }
.f-arrow { width: 10px; height: 13px; }
.f-rule { width: 168px; height: 2px; margin: 2px 0 0 -6px; background: #eee; }
.f-h2 { margin-top: 21px; }

/* I */
.i-bar { display: flex; align-items: center; justify-content: space-between; height: 47px; padding: 0 16px 3px 17px; background: #03a08a; border-bottom: 3px solid #017d6a; position: relative; z-index: 1; }
.i-burger { width: 18px; height: 14px; }
.i-list { width: 20px; height: 18px; }
.i-brand { font-size: 20px; color: #fff; letter-spacing: -.25px; }
.i-body { padding: 0 15px 0 14px; height: 372px; font-size: 13.500px; color: #444; }
.i-cut { height: 27px; margin: 0 -1px; border-bottom: 1px solid #e8e8e8; overflow: hidden; }
.i-title { margin: -14px 0 0 1px; font-size: 22px; line-height: 28px; color: #333; letter-spacing: -.2px; }
.i-field { height: 68.500px; padding-top: 15.500px; }
.i-first { padding-top: 15px; height: 69px; }
.i-first .i-label { margin-bottom: 6px; }
.i-label { display: flex; align-items: center; gap: 4px; height: 17px; margin-bottom: 4px; font-weight: 500; letter-spacing: -.25px; white-space: nowrap; }
.i-plus { width: 15px; height: 15px; }
.i-select, .i-input { display: flex; justify-content: flex-end; height: 31px; border: 1px solid #ddd; border-radius: 4px; overflow: hidden; background: #fff; }
.i-focus { border-color: #6aaed8; box-shadow: 0 0 2px #9fcbe8; }
.i-arrow { display: flex; justify-content: center; padding-top: 6px; width: 23px; background: #ddd; }
.i-tri { width: 9px; height: 9px; }
.i-date { display: flex; }
.i-input.i-ph { flex: 1; justify-content: flex-start; align-items: center; padding-left: 12px; border-radius: 4px 0 0 4px; color: #aaa; font-weight: 400; }
.i-calbtn { display: flex; width: 40px; height: 31px; align-items: center; justify-content: center; border: 1px solid #ddd; border-left: 0; border-radius: 0 4px 4px 0; }
.i-cal { width: 12px; height: 12px; }
```
